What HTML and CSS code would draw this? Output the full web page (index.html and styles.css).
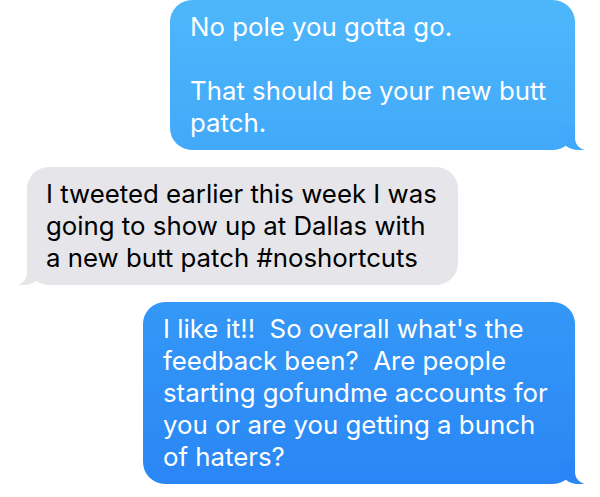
FILE: index.html
```html
<!DOCTYPE html>
<html lang="en">
<head>
  <meta charset="UTF-8">
  <meta name="viewport" content="width=device-width, initial-scale=1.0">
  <title>Messages</title>
  <link rel="stylesheet" href="styles.css">
</head>
<body>
  <div class="thread">
    <div class="bubble sent first">
      <p>No pole you gotta go.</p>
      <p class="gap">That should be your new butt<br>patch.</p>
    </div>

    <div class="bubble received second">
      <p>I tweeted earlier this week I was<br>going to show up at Dallas with<br>a new butt patch #noshortcuts</p>
    </div>

    <div class="bubble sent third">
      <p>I like it!!&nbsp; So overall what's the<br>feedback been?&nbsp; Are people<br>starting gofundme accounts for<br>you or are you getting a bunch<br>of haters?</p>
    </div>
  </div>
</body>
</html>
```

FILE: styles.css
```css
body {
  margin: 0;
  background: #fff;
  font-family: Inter, 'Liberation Sans', Arial, sans-serif;
}
.thread {
  display: flex;
  flex-direction: column;
  gap: 17px;
  padding: 0 25px 0 27px;
}
.bubble {
  position: relative;
  box-sizing: border-box;
  padding: 11px 20px;
  border-radius: 22px;
  font-size: 25.8px;
  line-height: 32px;
}
.bubble p {
  margin: 0;
  white-space: nowrap;
}
.bubble .gap {
  margin-top: 32px;
}
.sent {
  align-self: flex-end;
  color: #fff;
}
.received {
  align-self: flex-start;
  color: #000;
  background: #e5e5ea;
  padding-left: 19px;
}

/* tails */
.bubble::before,
.bubble::after {
  content: "";
  position: absolute;
  bottom: 0;
  height: 24px;
}
.sent::before {
  right: -9px;
  width: 24px;
  border-bottom-left-radius: 18px 16px;
}
.sent::after {
  right: -30px;
  width: 30px;
  background: #fff;
  border-bottom-left-radius: 12px;
}
.received::before {
  left: -9px;
  width: 24px;
  background: #e5e5ea;
  border-bottom-right-radius: 18px 16px;
}
.received::after {
  left: -30px;
  width: 30px;
  background: #fff;
  border-bottom-right-radius: 12px;
}

.first {
  width: 405px;
  background: linear-gradient(#4eb7fb, #41a9f9);
}
.first::before {
  background: #41a9f9;
}
.second {
  width: 431px;
}
.third {
  width: 432px;
  background: linear-gradient(#3498f7, #2a86f5);
}
.third::before {
  background: #2a86f5;
}
```
